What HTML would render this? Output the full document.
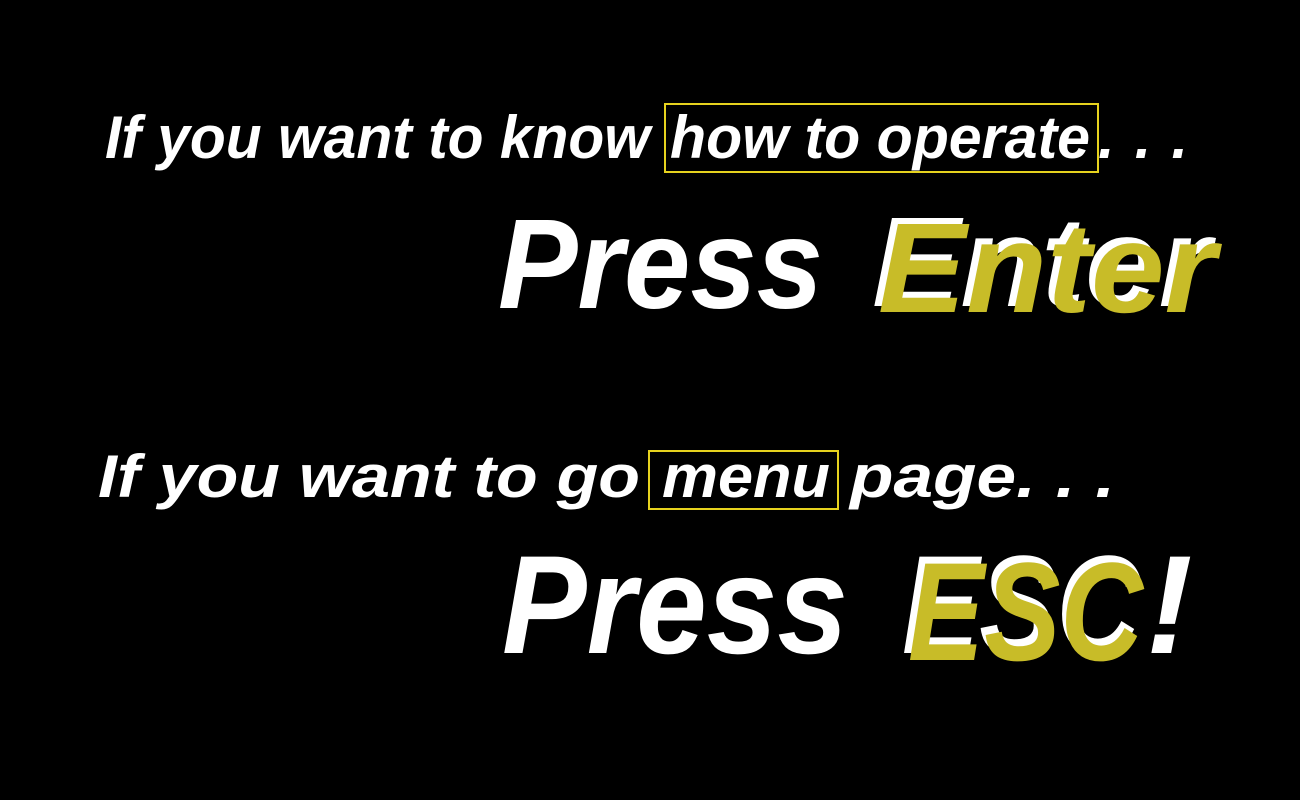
<!DOCTYPE html>
<html><head><style>
html,body{margin:0;background:#000;width:1300px;height:800px;overflow:hidden}
svg{display:block}
text{font-family:"Liberation Sans",sans-serif;font-weight:bold;font-style:italic;fill:#fff}
.c{fill:#c8bc28}
</style></head><body>
<svg width="1300" height="800" viewBox="0 0 1300 800">
<text x="105" y="158" font-size="60" textLength="545" lengthAdjust="spacingAndGlyphs">If you want to know</text>
<text x="670" y="158" font-size="60" textLength="420" lengthAdjust="spacingAndGlyphs">how to operate</text>
<text x="1098" y="158" font-size="60" textLength="90" lengthAdjust="spacing">. . .</text>
<rect x="665" y="104" width="433" height="68" fill="none" stroke="#e6d21e" stroke-width="2"/>

<text x="498" y="308" font-size="128" textLength="325" lengthAdjust="spacingAndGlyphs">Press</text>
<text x="872" y="306" font-size="128" textLength="338" lengthAdjust="spacingAndGlyphs">Enter</text>
<text class="c" x="878" y="312" font-size="128" textLength="338" lengthAdjust="spacingAndGlyphs">Enter</text>

<text x="98" y="497" font-size="60" textLength="542" lengthAdjust="spacingAndGlyphs">If you want to go</text>
<text x="662" y="497" font-size="60" textLength="168" lengthAdjust="spacingAndGlyphs">menu</text>
<text x="850" y="497" font-size="60" textLength="265" lengthAdjust="spacingAndGlyphs">page. . .</text>
<rect x="649" y="451" width="189" height="58" fill="none" stroke="#e6d21e" stroke-width="2"/>

<text x="502" y="653" font-size="140" textLength="346" lengthAdjust="spacingAndGlyphs">Press</text>
<text x="902" y="653" font-size="140" textLength="238" lengthAdjust="spacingAndGlyphs">ESC</text>
<text class="c" x="908" y="660" font-size="140" textLength="235" lengthAdjust="spacingAndGlyphs">ESC</text>
<text x="1146" y="653" font-size="140">!</text>
</svg>
</body></html>
